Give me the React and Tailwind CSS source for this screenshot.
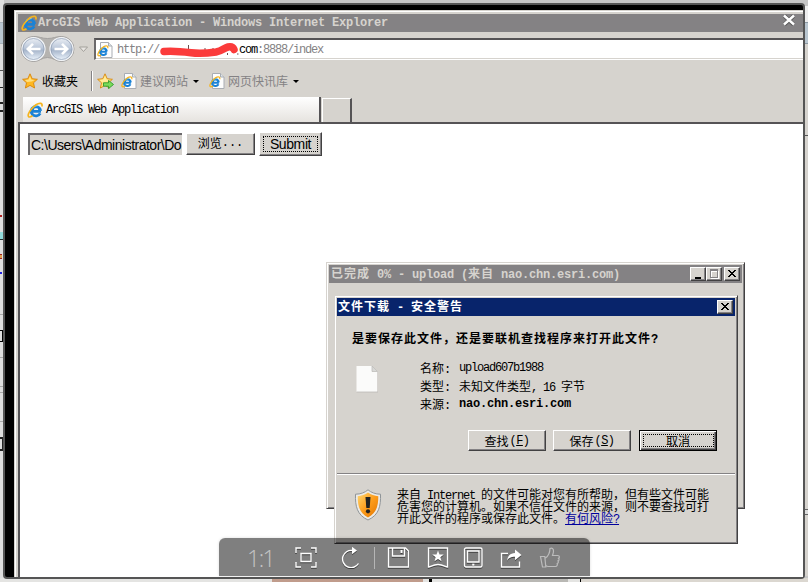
import clsx from "clsx";

const FACE = "bg-[#d6d3ce]";

// Latin runs sit on a fixed 6px (7px bold) cell, ideographs on a 12px (13px bold) cell
const Txt = ({ children, bold = false, className = "" }) => {
  const runs = children.match(/[\x20-\x7e]+|[^\x20-\x7e]+/g) || [];
  return (
    <span className={clsx("inline-flex items-baseline whitespace-pre", className)}>
      {runs.map((run, i) =>
        /^[\x20-\x7e]/.test(run) ? (
          <span
            key={i}
            className={clsx(
              "font-['Liberation_Mono',monospace] text-[12px]",
              bold ? "font-bold tracking-[-0.2px]" : "tracking-[-1.2px]"
            )}
          >
            {run}
          </span>
        ) : (
          <span
            key={i}
            className={clsx(
              "font-['Noto_Sans_CJK_SC',sans-serif] text-[12px]",
              bold && "font-bold tracking-[1px]"
            )}
          >
            {run}
          </span>
        )
      )}
    </span>
  );
};

const IeGlyph = () => (
  <>
    <path
      d="M14 9.300H5.600M5.400 8.400a3.700 3.800 0 0 1 7.400 0M13.200 11.400a4.800 4.600 0 1 1 .5-2.600"
      stroke="#1a82d6"
      strokeWidth="2.800"
    />
    <path d="M4.800 6.800A5 5 0 0 1 10.500 3.700" stroke="#7fd2fa" strokeWidth="1.200" />
    <path
      d="M14.800 4.600c.6-1.800.2-3-1-3.200C11.400 1 7.200 3.700 4.300 7.200 1.600 10.400.500 13.800 1.700 14.700c.8.6 2.300.1 3.800-.9"
      stroke="#f5b41e"
      strokeWidth="1.700"
    />
  </>
);

const IeLogo = ({ className }) => (
  <svg viewBox="0 0 16 16" className={className} fill="none">
    <IeGlyph />
  </svg>
);

const IePage = () => (
  <svg viewBox="0 0 16 16" className="size-4 shrink-0" fill="none">
    <path d="M3.500.500h8l3.500 3.500v11.500H3.500z" fill="#fdfdfd" stroke="#a9adb3" />
    <path d="M11.500.500v3.500H15" fill="#dfe5ea" stroke="#a9adb3" />
    <g transform="translate(0 3) scale(.72)">
      <IeGlyph />
    </g>
  </svg>
);

const Star = ({ add }) => (
  <svg viewBox="0 0 17 16" className="h-4 w-[17px] shrink-0">
    <path
      d="M8 .8l2.200 4.900 5.200.6-3.900 3.500 1.100 5.200L8 12.400 3.400 15l1.100-5.200L.6 6.300l5.200-.6z"
      fill={add ? "#ffe27a" : "#ffb820"}
      stroke="#d8860b"
      strokeWidth=".9"
    />
    <path d="M8 3l1.300 3.500 3.500.5-3 1.500L5 9 3 7l3.500-.5z" fill="#fff0a8" opacity=".7" />
    {add && (
      <path
        d="M6.500 9.800h5V7.400l5 4.100-5 4.100v-2.400h-5z"
        fill="#7bdc5a"
        stroke="#2f9a2c"
        strokeWidth=".9"
      />
    )}
  </svg>
);

const NavButtons = () => (
  <svg viewBox="0 0 72 28" className="h-7 w-[72px] shrink-0">
    <defs>
      <linearGradient id="orb" x1="0" y1="0" x2="0" y2="1">
        <stop offset="0" stopColor="#eef1f6" />
        <stop offset=".45" stopColor="#bcc8da" />
        <stop offset=".55" stopColor="#a5b4ca" />
        <stop offset="1" stopColor="#f0f8ff" />
      </linearGradient>
    </defs>
    <path
      d="M13.500 1.500c6 0 8 2 14 2s8-2 14-2a12.500 12.500 0 0 1 0 25c-6 0-8-4-14-4s-8 4-14 4a12.500 12.500 0 0 1 0-25z"
      fill="#b5b3b0"
      stroke="#a3a1a0"
    />
    {[13.5, 41.5].map((cx) => (
      <g key={cx}>
        <circle cx={cx} cy="14" r="11.500" fill="url(#orb)" stroke="#f3f5f8" strokeWidth="1.200" />
        <circle cx={cx} cy="14" r="10.500" fill="none" stroke="#8f9db3" strokeWidth=".7" />
      </g>
    ))}
    <g fill="none" stroke="#fff" strokeWidth="2.600">
      <path d="M20.500 14H8M13 8.800L7.800 14l5.200 5.200" />
      <path d="M34.500 14H47M42 8.800l5.200 5.200-5.200 5.200" />
    </g>
    <path d="M59.500 12h8l-4 4.500z" fill="#e8e6e2" stroke="#a3a09b" />
  </svg>
);

// Hand-drawn marker stroke over the host name
const Scribble = () => (
  <svg viewBox="0 0 80 18" className="h-[18px] w-20 shrink-0">
    <path d="M29.500 4v4M46 7v2M54 7v2M68.500 12v2M78 13h1.500" stroke="#6b5050" strokeWidth="1" />
    <path
      d="M5 10.500C14 9.800 22 10.500 32 11.800 42 13 50 12 57 11c6-1 8-4 12-5 3-.6 5 .2 6 2.500"
      fill="none"
      stroke="#fb3b3b"
      strokeWidth="7.500"
      strokeLinecap="round"
      strokeLinejoin="round"
    />
  </svg>
);

const Caret = () => <span className="border-x-[3px] border-t-[3px] border-x-transparent border-t-black" />;

const raised =
  "border border-t-white border-l-white border-r-[#424142] border-b-[#424142] shadow-[inset_-1px_-1px_0_#848284]";

const raisedDefault =
  "border border-black shadow-[inset_1px_1px_0_#fff,inset_-1px_-1px_0_#424142,inset_-2px_-2px_0_#848284]";

const CaptionButton = ({ kind, className }) => (
  <span className={clsx("flex h-[14px] w-4 items-center justify-center", FACE, raised, className)}>
    <svg viewBox="0 0 12 10" className="h-[10px] w-3" fill="none" shapeRendering="crispEdges">
      {kind === "min" && <path d="M3 8h6v2H3z" fill="#000" />}
      {kind === "max" && (
        <>
          <path d="M3 2.500h8M3.500 2v8M10.500 2v8M3 9.500h8" stroke="#fff" />
          <path d="M2 .500h8M2 1.500h8M2.500 1v7M9.500 1v7M2 8.500h8" stroke="#848284" />
        </>
      )}
      {kind === "close" && (
        <path
          d="M2 1h2v1h1v1h2v-1h1v-1h2v1h-1v1h-1v1h-1v1h1v1h1v1h1v1h-2v-1h-1v-1h-2v1h-1v1h-2v-1h1v-1h1v-1h1v-1h-1v-1h-1v-1h-1z"
          fill="#000"
        />
      )}
    </svg>
  </span>
);

const DialogButton = ({ children, hotkey, focused }) => (
  <button
    className={clsx("flex h-[21px] w-[78px] items-center justify-center", FACE, focused ? raisedDefault : raised)}
  >
    <span
      className={clsx(
        "flex items-center justify-center",
        focused && "h-[13px] w-[71px] border border-dotted border-black"
      )}
    >
      <Txt className="leading-none">{children}</Txt>
      {hotkey && (
        <span className="ml-px font-['Liberation_Mono',monospace] text-[12px] leading-none tracking-[-0.5px]">
          (<u>{hotkey}</u>)
        </span>
      )}
    </span>
  </button>
);

const Shield = () => (
  <svg viewBox="0 0 28 32" className="h-8 w-7 shrink-0">
    <defs>
      <linearGradient id="shield" x1="0" y1="0" x2="1" y2="1">
        <stop offset="0" stopColor="#ffd873" />
        <stop offset=".5" stopColor="#fd9d1c" />
        <stop offset="1" stopColor="#e27500" />
      </linearGradient>
    </defs>
    <path
      d="M14 .8c3 2.700 7.500 4.400 12.500 4.400.4 12-1.500 20.800-12.500 25.800C3 26 1.100 17.200 1.500 5.200 6.500 5.200 11 3.500 14 .8z"
      fill="#eceae6"
      stroke="#8f9498"
    />
    <path
      d="M14 3.500c3 2.200 6.500 3.400 10.300 3.700 0 9.800-1.800 17-10.300 21.200C5.500 24.200 3.700 17 3.700 7.200 7.500 6.900 11 5.700 14 3.500z"
      fill="url(#shield)"
    />
    <path d="M11.500 8h5l-.8 11h-3.400z" fill="#222" />
    <circle cx="14" cy="22.300" r="2.100" fill="#222" />
  </svg>
);

const BlankFile = () => (
  <svg viewBox="0 0 22 28" className="h-7 w-[22px]">
    <path d="M.5 1h15.500l5.500 5.500V27H.5z" fill="#fbfbfa" />
    <path d="M16 1v5.500h5.500z" fill="#d9d9d7" stroke="#b9b8b5" strokeWidth=".7" />
    <path d="M.5 27h21.500V7" fill="none" stroke="#bcbab6" strokeWidth=".8" />
  </svg>
);

const toolbarIcons = [
  {
    id: "fit",
    gap: "ml-[22px]",
    art: <path d="M1 6V1h5M16 1h5v5M21 15v5h-5M6 20H1v-5M6 6.500h10v8H6z" />,
  },
  {
    id: "rotate",
    gap: "ml-[23px]",
    art: (
      <>
        <path d="M18.500 16.500A8.600 8.600 0 1 1 12.500 3.500" />
        <path d="M12-.2v7.400L17 3.500z" fill="currentColor" stroke="none" />
      </>
    ),
  },
  { id: "sep", gap: "ml-3" },
  {
    id: "save",
    gap: "ml-3",
    art: (
      <>
        <path d="M1.500 1h17l3 3v16h-20zM5.500 1v8h12V1" />
        <path d="M13.500 3h2v3h-2z" fill="currentColor" stroke="none" />
      </>
    ),
  },
  {
    id: "bookmark",
    gap: "ml-[18px]",
    art: (
      <>
        <path d="M1.500 1h19v19c-2.500 0-4-2.500-9.500-2.500S4 20 1.500 20z" />
        <path
          d="M11 3.500l1.500 3.900 4.200.2-3.300 2.600 1.100 4.100-3.500-2.300-3.500 2.300 1.100-4.100-3.300-2.600 4.200-.2z"
          fill="currentColor"
          stroke="none"
        />
      </>
    ),
  },
  {
    id: "tablet",
    gap: "ml-[14px]",
    art: (
      <>
        <rect x="1.500" y="1" width="17.500" height="19" rx="1.500" />
        <path d="M4.500 4h11.500v11H4.500z" />
        <path d="M9.200 16.700h2.200v2H9.200z" fill="currentColor" stroke="none" />
      </>
    ),
  },
  {
    id: "share",
    gap: "ml-[15px]",
    art: (
      <>
        <path d="M8 6.500H1.500V20h18v-5.500" />
        <path
          d="M7 14c.5-5 3-7.800 8-8V2.500L21.500 8 15 13.200V9.800c-4 0-6.200 1-8 4.200z"
          fill="currentColor"
          stroke="none"
        />
      </>
    ),
  },
];

const ViewerToolbar = () => (
  <div className="absolute left-[219px] top-[538px] flex h-[38px] w-[371px] items-center rounded-t-md bg-black/50 pl-[28px] pt-px text-white shadow-[0_0_3px_rgba(0,0,0,0.15)]">
    <span className="w-[26px] text-center font-['Open_Sans',sans-serif] text-[23px] font-light leading-[22px] tracking-[-1.5px] text-[#c4c4c4]">
      1:1
    </span>
    {toolbarIcons.map(({ id, gap, art }) =>
      art ? (
        <svg
          key={id}
          viewBox="0 0 22 21"
          className={clsx("h-[21px] w-[22px] shrink-0 drop-shadow-[0_1px_0_rgba(0,0,0,0.5)]", gap)}
          fill="none"
          stroke="currentColor"
          strokeWidth="1.400"
        >
          {art}
        </svg>
      ) : (
        <span key={id} className={clsx("h-[22px] w-px bg-[#b5b5b5]", gap)} />
      )
    )}
    <svg
      viewBox="0 0 22 21"
      className="ml-[17px] h-[21px] w-[22px] shrink-0"
      fill="none"
      stroke="#bcbcbc"
      strokeWidth="1.200"
    >
      <path d="M1.500 9.500h4.300l1 10.500H3.500zM6.500 11c3-2 4.300-4.500 4.500-9.500 2-1 3.500 0 3.500 2.500 0 2-.7 3.500-1 4.500h5.300c2 0 2 2.300.7 2.800 1 1 .6 2.200-.5 2.600.7 1.200.2 2.200-.8 2.600.5 1.500-.2 3-1.700 3H9c-1 0-1.500-.5-2.300-1" />
    </svg>
  </div>
);

const windowFrame =
  "border border-t-[#d6d3ce] border-l-[#d6d3ce] border-r-[#424142] border-b-[#424142] p-[2px] shadow-[inset_1px_1px_0_#fff,inset_-1px_-1px_0_#848284]";

const DownloadProgress = () => (
  <div className={clsx("absolute left-[326px] top-[262px] h-[247px] w-[419px]", FACE, windowFrame)}>
    <div className="flex h-[18px] items-center bg-[#848284] pl-[2px] pr-[2px] text-[#d6d3ce]">
      <Txt bold className="grow leading-none">
        已完成 0% - upload (来自 nao.chn.esri.com)
      </Txt>
      <CaptionButton kind="min" />
      <CaptionButton kind="max" />
      <CaptionButton kind="close" className="ml-[2px]" />
    </div>
  </div>
);

const details = [
  ["名称:", "upload607b1988"],
  ["类型:", "未知文件类型, 16 字节"],
  ["来源:", "nao.chn.esri.com"],
];

const SecurityWarning = () => (
  <div className={clsx("absolute left-[334px] top-[295px] flex h-[249px] w-[404px] flex-col", FACE, windowFrame)}>
    <div className="flex h-[18px] shrink-0 items-center bg-[#08246b] pl-px pr-[2px] text-white">
      <Txt bold className="grow leading-none">
        文件下载 - 安全警告
      </Txt>
      <CaptionButton kind="close" />
    </div>

    <div className="flex h-[158px] shrink-0 flex-col border-b border-[#848284] pl-[15px]">
      <Txt bold className="mt-[13px] h-[18px] leading-[18px]">
        是要保存此文件，还是要联机查找程序来打开此文件?
      </Txt>
      <div className="mt-[12px] flex pl-1">
        <div className="mt-[6px] w-16">
          <BlankFile />
        </div>
        <div>
          {details.map(([label, value], i) => (
            <div key={label} className="flex h-[18px]">
              <Txt className="w-[39px] leading-[18px]">{label}</Txt>
              <Txt bold={i === 2} className="leading-[18px]">
                {value}
              </Txt>
            </div>
          ))}
        </div>
      </div>
      <div className="mt-[17px] flex gap-[7px] pl-[116px]">
        <DialogButton hotkey="F">查找</DialogButton>
        <DialogButton hotkey="S">保存</DialogButton>
        <span className="ml-px">
          <DialogButton focused>取消</DialogButton>
        </span>
      </div>
    </div>

    <div className="flex grow border-t border-white pl-[17px] pt-[13px]">
      <div className="mt-px w-[43px]">
        <Shield />
      </div>
      <div className="flex flex-col leading-3">
        <Txt className="h-3">来自 Internet 的文件可能对您有所帮助，但有些文件可能</Txt>
        <Txt className="h-3">危害您的计算机。如果不信任文件的来源，则不要查找可打</Txt>
        <div className="flex h-3">
          <Txt>开此文件的程序或保存此文件。</Txt>
          <Txt className="text-[#00009c] underline">有何风险?</Txt>
        </div>
      </div>
    </div>
  </div>
);

const Browser = () => (
  <div className={clsx("flex grow flex-col border-l border-t border-[#d6d3ce] shadow-[inset_1px_1px_0_#fff]", FACE)}>
    <div className="ml-[3px] mt-[3px] flex h-[18px] shrink-0 items-center bg-[#848284] pl-[3px] text-[#d6d3ce]">
      <IeLogo className="size-4 shrink-0" />
      <Txt bold className="ml-px leading-none">
        ArcGIS Web Application - Windows Internet Explorer
      </Txt>
    </div>

    <div className="flex h-[34px] shrink-0 items-center pl-[5px]">
      <NavButtons />
      <div className="ml-[2px] flex h-[22px] grow items-center border-b border-l-2 border-t-2 border-b-white border-l-[#6b696b] border-t-[#555355] bg-white pl-px shadow-[inset_0_-1px_0_#d6d3ce]">
        <IePage />
        <Txt className="ml-1 text-[#848284]">http://</Txt>
        <Scribble />
        <Txt>com</Txt>
        <Txt className="text-[#848284]">:8888/index</Txt>
      </div>
    </div>

    <div className="flex h-[30px] shrink-0 items-center pl-[7px] text-[#848284]">
      <Star />
      <Txt className="ml-[3px] text-black">收藏夹</Txt>
      <span className="ml-[13px] mr-1 h-5 w-[2px] border-l border-[#848284] bg-white" />
      <Star add />
      <span className="ml-[7px] mr-[3px] flex">
        <IePage />
      </span>
      <Txt className="mr-[5px]">建议网站</Txt>
      <Caret />
      <span className="ml-[10px] mr-[3px] flex">
        <IePage />
      </span>
      <Txt className="mr-[5px]">网页快讯库</Txt>
      <Caret />
    </div>

    <div className="flex h-[26px] shrink-0 items-end gap-px pl-[8px]">
      <div className="flex h-[25px] w-[298px] items-center border-r-2 border-[#555355] bg-linear-to-b from-white to-[#e6e3df] pl-1">
        <IeLogo className="size-4 shrink-0" />
        <Txt className="ml-[3px] mt-px">ArcGIS Web Application</Txt>
      </div>
      <div className="h-6 w-[30px] border-l border-r-2 border-t border-l-white border-r-[#555355] border-t-white" />
    </div>

    <div className="ml-[3px] grow border-l-2 border-t-2 border-l-[#555355] border-t-[#555355] bg-white">
      <div className="flex items-center pl-2 pt-[8px]">
        <div
          className={clsx(
            "flex h-[22px] w-[154px] items-center overflow-hidden border-l-2 border-t-2 border-[#6b696b] pl-px",
            FACE
          )}
        >
          <span className="whitespace-nowrap font-['Liberation_Sans',sans-serif] text-[14px] tracking-[-0.5px]">
            C:\Users\Administrator\Do
          </span>
        </div>
        <button
          className={clsx("ml-1 flex h-[22px] w-[69px] items-center justify-center pb-[3px]", FACE, raised)}
        >
          <Txt className="leading-none">浏览</Txt>
          <span className="font-['Liberation_Mono',monospace] text-[12px] leading-none">...</span>
        </button>
        <button className={clsx("ml-1 flex h-6 w-[63px] items-center justify-center", FACE, raised)}>
          <span className="flex h-4 w-[55px] items-center justify-center border border-dotted border-black font-['Liberation_Sans',sans-serif] text-[14px] leading-none tracking-[-0.4px]">
            Submit
          </span>
        </button>
      </div>
    </div>
  </div>
);

// Slivers of the page that stay visible around the viewer
const Backdrop = () => (
  <>
    <div className="absolute left-0 top-0 flex h-[582px] w-1 flex-col overflow-hidden bg-[#dedede]">
      <span className="mt-[22px] h-[22px] border-y border-[#a8b2ba] bg-[#b9c6d0]" />
      <span className="mt-[26px] h-px bg-[#555]" />
      <span className="mt-4 h-px bg-[#222]" />
      <span className="mt-[14px] h-[10px] border-y-2 border-[#222]" />
      <span className="mt-[103px] h-[2px] w-[2px] bg-[#b02020]" />
      <span className="mt-[15px] h-[8px] w-[3px] border-b border-[#203030] bg-[#93dcdc]" />
      <span className="mt-[14px] h-[5px] w-[2px] border-y border-[#a02020] bg-[#e0a050]" />
      <span className="mt-[13px] h-[2px] w-[2px] bg-[#2020e0]" />
      <span className="mt-[40px] h-px bg-[#aaa]" />
      <span className="mt-[15px] h-[12px] w-[3px] border-y border-r border-black" />
      <span className="mt-[15px] h-px bg-[#aaa]" />
      <span className="mt-[28px] h-px bg-[#aaa]" />
      <span className="mt-[5px] h-px bg-[#aaa]" />
      <span className="mt-[28px] h-px bg-[#aaa]" />
      <span className="mt-[15px] h-[14px] w-[3px] border-y-2 border-r border-[#222]" />
    </div>
    <div className="absolute bottom-0 left-0 flex h-1 w-full bg-[#e4e4e2]">
      <span className="ml-[272px] w-[151px] bg-[#c09c8c]" />
      <span className="ml-[6px] w-[3px] bg-black" />
      <span className="ml-[68px] w-[68px] bg-[#b9b8b4]" />
      <span className="ml-[12px] w-px bg-black" />
      <span className="grow bg-[#dbd7d0]" />
    </div>
    <div className="absolute right-0 top-[6px] flex h-[570px] w-[3px] flex-col bg-[#d6d3ce]">
      <span className="h-4 bg-[#eee]" />
      <span className="h-[22px] border-y border-[#8a98a2] bg-[#b9c6d0]" />
      <span className="mt-[91px] h-[6px] border-t border-[#555]" />
      <span className="mt-[368px] h-[6px] border-b border-t border-[#666] bg-[#ddd]" />
    </div>
  </>
);

const App = () => (
  <div className="relative h-[582px] w-[808px] overflow-hidden bg-[#c6c6c6] text-black">
    <Backdrop />
    <div className="absolute left-[3px] top-[3px] flex h-[576px] w-[802px] flex-col rounded-[4px] border-2 border-[#555] bg-black pl-[9px] pt-[5px]">
      <Browser />
    </div>
    <DownloadProgress />
    <SecurityWarning />
    <ViewerToolbar />
    <svg viewBox="0 0 14 12" className="absolute left-[782px] top-[14px] h-3 w-[14px]">
      <path d="M2.500 2l9 8.500M11.500 2l-9 8.500" stroke="#555" strokeWidth="3.800" />
      <path d="M2 1.500l10 9M12 1.500l-10 9" stroke="#fff" strokeWidth="2.400" />
    </svg>
  </div>
);

export default App;
